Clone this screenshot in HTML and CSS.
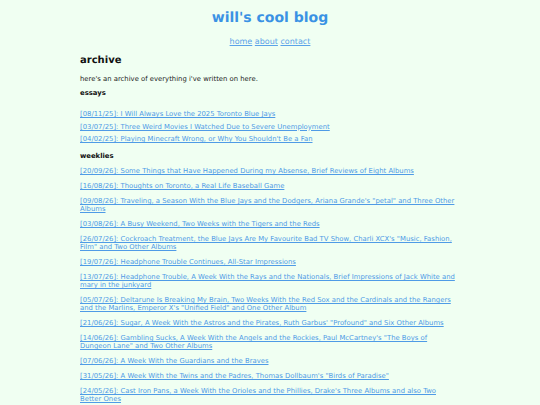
FILE: index.html
```html
<!DOCTYPE html>
<html>
<head>
<meta charset="utf-8">
<link rel="stylesheet" href="styles.css">
</head>
<body>
<header class="header">
  <h1 class="site-title">will's cool blog</h1>
  <nav class="nav"><a href="#">home</a> <a href="#">about</a> <a href="#">contact</a></nav>
</header>
<main class="content">
  <h2 class="page-title">archive</h2>
  <p class="intro">here's an archive of everything i've written on here.</p>
  <h3 class="section">essays</h3>
  <ul class="list essays">
    <li><a href="#">[08/11/25]: I Will Always Love the 2025 Toronto Blue Jays</a></li>
    <li><a href="#">[03/07/25]: Three Weird Movies I Watched Due to Severe Unemployment</a></li>
    <li><a href="#">[04/02/25]: Playing Minecraft Wrong, or Why You Shouldn't Be a Fan</a></li>
  </ul>
  <h3 class="section sec2">weeklies</h3>
  <ul class="list weeklies">
    <li><a href="#">[20/09/26]: Some Things that Have Happened During my Absense, Brief Reviews of Eight Albums</a></li>
    <li><a href="#">[16/08/26]: Thoughts on Toronto, a Real Life Baseball Game</a></li>
    <li><a href="#">[09/08/26]: Traveling, a Season With the Blue Jays and the Dodgers, Ariana Grande's "petal" and Three Other Albums</a></li>
    <li><a href="#">[03/08/26]: A Busy Weekend, Two Weeks with the Tigers and the Reds</a></li>
    <li><a href="#">[26/07/26]: Cockroach Treatment, the Blue Jays Are My Favourite Bad TV Show, Charli XCX's "Music, Fashion, Film" and Two Other Albums</a></li>
    <li><a href="#">[19/07/26]: Headphone Trouble Continues, All-Star Impressions</a></li>
    <li><a href="#">[13/07/26]: Headphone Trouble, A Week With the Rays and the Nationals, Brief Impressions of Jack White and mary in the junkyard</a></li>
    <li><a href="#">[05/07/26]: Deltarune Is Breaking My Brain, Two Weeks With the Red Sox and the Cardinals and the Rangers and the Marlins, Emperor X's "Unified Field" and One Other Album</a></li>
    <li><a href="#">[21/06/26]: Sugar, A Week With the Astros and the Pirates, Ruth Garbus' "Profound" and Six Other Albums</a></li>
    <li><a href="#">[14/06/26]: Gambling Sucks, A Week With the Angels and the Rockies, Paul McCartney's "The Boys of Dungeon Lane" and Two Other Albums</a></li>
    <li><a href="#">[07/06/26]: A Week With the Guardians and the Braves</a></li>
    <li><a href="#">[31/05/26]: A Week With the Twins and the Padres, Thomas Dollbaum's "Birds of Paradise"</a></li>
    <li><a href="#">[24/05/26]: Cast Iron Pans, a Week With the Orioles and the Phillies, Drake's Three Albums and also Two Better Ones</a></li>
  </ul>
</main>
</body>
</html>
```

FILE: styles.css
```css
html, body {
  margin: 0;
  padding: 0;
  background: #f0fff2;
}
body {
  font-family: "DejaVu Sans", Verdana, sans-serif;
  color: #1c1c1c;
  font-size: 6.85px;
  line-height: 8px;
  text-rendering: geometricPrecision;
}
a {
  color: #4f9be6;
  text-decoration: underline;
}
.header {
  text-align: center;
  padding-top: 10px;
}
.site-title {
  margin: 0;
  font-size: 14px;
  line-height: 17px;
  font-weight: bold;
  color: #3a92e4;
}
.nav {
  margin-top: 9px;
  font-size: 8px;
  line-height: 11px;
}
.nav a {
  color: #5aa2e8;
}
.content {
  width: 378px;
  margin: 0 auto;
  padding-right: 2px;
}
.page-title {
  margin: 7px 0 0;
  font-size: 10px;
  line-height: 13px;
  font-weight: bold;
  color: #111;
}
.intro {
  margin: 8px 0 0;
}
.section {
  margin: 6px 0 0;
  font-size: 6.85px;
  line-height: 8px;
  font-weight: bold;
  color: #111;
}
.sec2 {
  margin-top: 9px;
}
.list {
  list-style: none;
  margin: 0;
  padding: 0;
}
.list li {
  margin-top: 4.5px;
}
.essays {
  margin-top: 13px;
}
.weeklies {
  margin-top: 2px;
}
.weeklies li {
  margin-top: 7px;
}
```
